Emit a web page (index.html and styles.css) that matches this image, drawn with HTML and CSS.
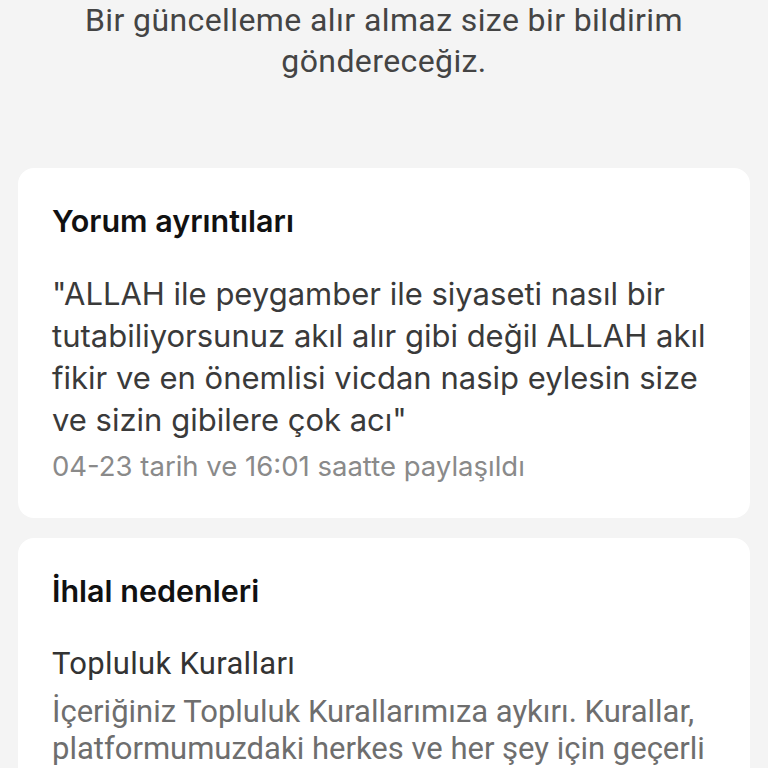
FILE: index.html
```html
<!DOCTYPE html>
<html lang="tr">
<head>
<meta charset="utf-8">
<link rel="stylesheet" href="styles.css">
</head>
<body>
<div class="page">
  <p class="notice">Bir güncelleme alır almaz size bir bildirim göndereceğiz.</p>

  <section class="card card-comment">
    <h2 class="card-title">Yorum ayrıntıları</h2>
    <p class="comment">"ALLAH ile peygamber ile siyaseti nasıl bir tutabiliyorsunuz akıl alır gibi değil ALLAH akıl fikir ve en önemlisi vicdan nasip eylesin size ve sizin gibilere çok acı"</p>
    <p class="meta">04-23 tarih ve 16:01 saatte paylaşıldı</p>
  </section>

  <section class="card card-reasons">
    <h2 class="card-title">İhlal nedenleri</h2>
    <h3 class="reason-name">Topluluk Kuralları</h3>
    <p class="reason-desc">İçeriğiniz Topluluk Kurallarımıza aykırı. Kurallar, platformumuzdaki herkes ve her şey için geçerli olup herkes için güvenli bir ortam sağlar.</p>
  </section>
</div>
</body>
</html>
```

FILE: styles.css
```css
html, body {
  margin: 0;
  padding: 0;
  background: #f4f4f4;
}

body {
  font-family: Inter, Roboto, "Liberation Sans", Arial, sans-serif;
  -webkit-font-smoothing: antialiased;
}

.page {
  display: flex;
  flex-direction: column;
  gap: 20px;
  padding: 0 18px;
}

.notice {
  margin: 0 0 66px;
  padding: 0 40px;
  text-align: center;
  font-family: Roboto, "Liberation Sans", sans-serif;
  font-size: 32px;
  line-height: 41px;
  letter-spacing: 0.4px;
  color: #444444;
}

.card {
  background: #ffffff;
  border-radius: 16px;
  padding: 35px 34px 35px;
}

.card-title {
  margin: 0;
  font-size: 30.5px;
  line-height: 36px;
  font-weight: 600;
  color: #111111;
}

.comment {
  margin: 34px 0 0;
  font-size: 31px;
  line-height: 42px;
  color: #3a3a3a;
}

.meta {
  margin: 8px 0 0;
  font-size: 27.5px;
  line-height: 34px;
  color: #8a8a8a;
}

.reason-name {
  margin: 37px 0 0;
  font-family: Roboto, "Liberation Sans", sans-serif;
  font-size: 31px;
  line-height: 36px;
  font-weight: 400;
  letter-spacing: 0.3px;
  color: #333333;
}

.reason-desc {
  margin: 11px 0 0;
  font-family: Roboto, "Liberation Sans", sans-serif;
  font-size: 31px;
  line-height: 37px;
  color: #6e6e6e;
}
```
